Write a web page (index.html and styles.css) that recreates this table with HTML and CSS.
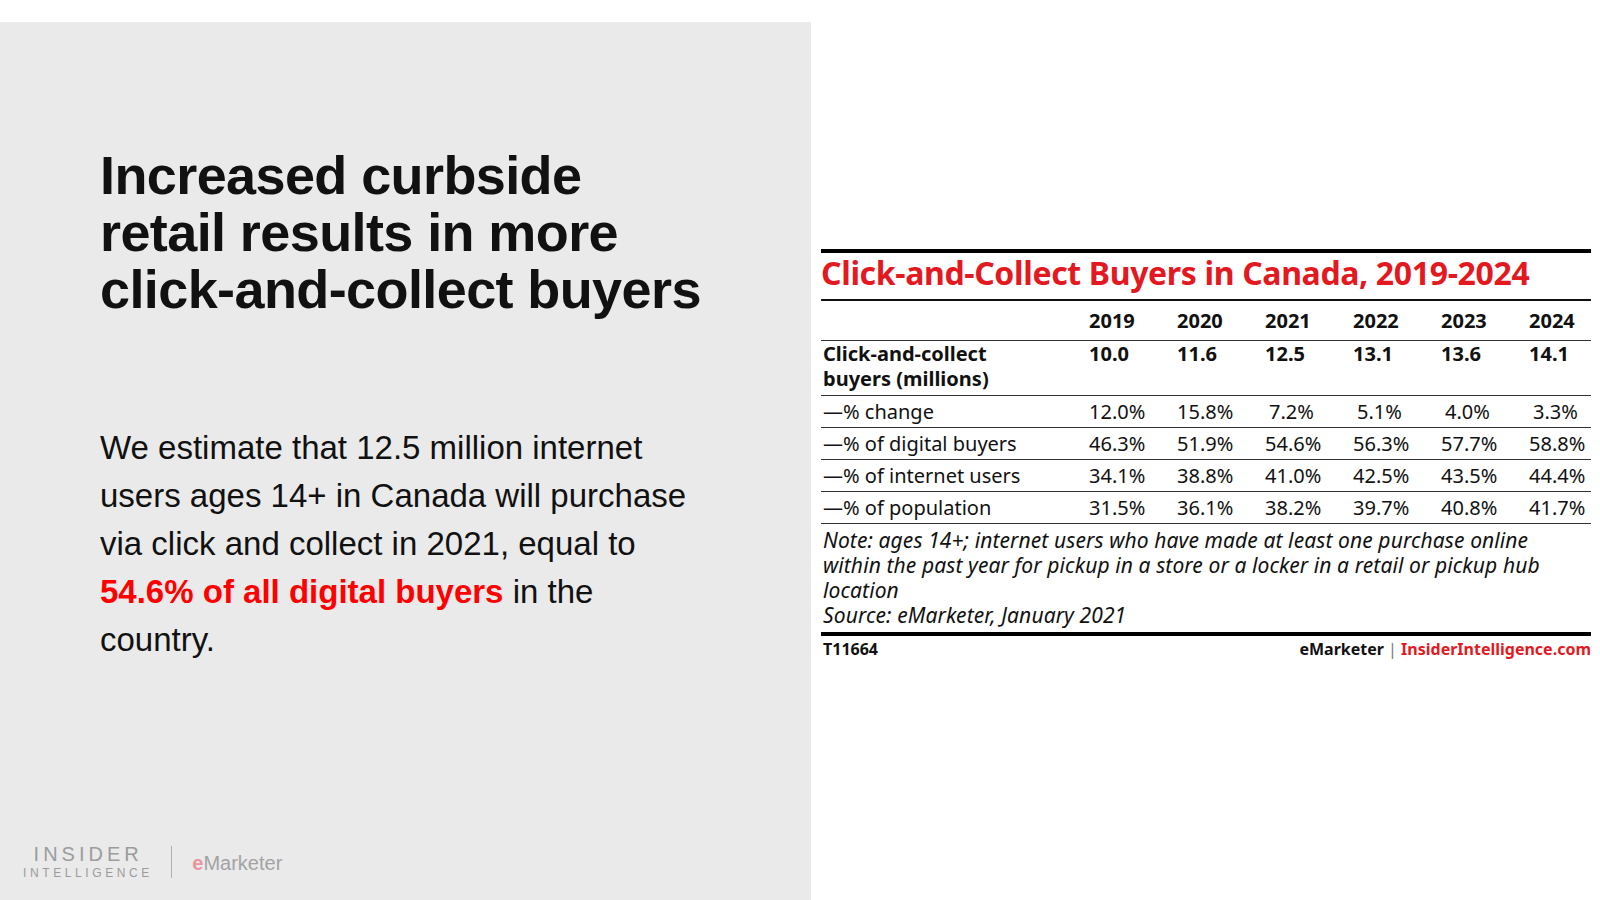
FILE: index.html
```html
<!DOCTYPE html>
<html lang="en">
<head>
<meta charset="utf-8">
<title>Click-and-Collect Buyers in Canada</title>
<link rel="stylesheet" href="styles.css">
</head>
<body>
<div class="topbar"></div>
<div class="slide">
  <section class="left">
    <h1 class="headline">Increased curbside<br>retail results in more<br>click-and-collect buyers</h1>
    <p class="lede">We estimate that 12.5 million internet users ages 14+ in Canada will purchase via click and collect in 2021, equal to <strong class="hl">54.6% of all digital buyers</strong> in the country.</p>
    <div class="brand">
      <div class="ii">
        <span class="ii-top">INSIDER</span>
        <span class="ii-bot">INTELLIGENCE</span>
      </div>
      <span class="brand-sep"></span>
      <span class="emk"><span class="emk-e">e</span>Marketer</span>
    </div>
  </section>
  <section class="right">
    <div class="chart">
      <div class="chart-title">Click-and-Collect Buyers in Canada, 2019-2024</div>
      <div class="row head">
        <span></span><span>2019</span><span>2020</span><span>2021</span><span>2022</span><span>2023</span><span>2024</span>
      </div>
      <div class="row main">
        <span>Click-and-collect buyers (millions)</span><span>10.0</span><span>11.6</span><span>12.5</span><span>13.1</span><span>13.6</span><span>14.1</span>
      </div>
      <div class="row">
        <span>—% change</span><span>12.0%</span><span>15.8%</span><span class="n1">7.2%</span><span class="n1">5.1%</span><span class="n1">4.0%</span><span class="n1">3.3%</span>
      </div>
      <div class="row">
        <span>—% of digital buyers</span><span>46.3%</span><span>51.9%</span><span>54.6%</span><span>56.3%</span><span>57.7%</span><span>58.8%</span>
      </div>
      <div class="row">
        <span>—% of internet users</span><span>34.1%</span><span>38.8%</span><span>41.0%</span><span>42.5%</span><span>43.5%</span><span>44.4%</span>
      </div>
      <div class="row">
        <span>—% of population</span><span>31.5%</span><span>36.1%</span><span>38.2%</span><span>39.7%</span><span>40.8%</span><span>41.7%</span>
      </div>
      <div class="note">Note: ages 14+; internet users who have made at least one purchase online within the past year for pickup in a store or a locker in a retail or pickup hub location<br>Source: eMarketer, January 2021</div>
      <div class="chart-foot">
        <span class="code">T11664</span>
        <span class="credit"><b>eMarketer</b> <span class="bar">|</span> <b class="red">InsiderIntelligence.com</b></span>
      </div>
    </div>
  </section>
</div>
</body>
</html>
```

FILE: styles.css
```css
* { box-sizing: border-box; }
html, body { margin: 0; padding: 0; background: #fff; }
body { width: 1600px; height: 900px; overflow: hidden; }

.topbar { height: 22px; background: #fff; }

.slide { display: flex; height: 878px; }

.left {
  width: 811px;
  background: #eaeaea;
  display: flex;
  flex-direction: column;
  padding: 125px 0 0 100px;
  font-family: "Liberation Sans", Arial, sans-serif;
  color: #111;
}

.headline {
  margin: 0;
  width: 660px;
  font-size: 54px;
  line-height: 57px;
  font-weight: 700;
  letter-spacing: -0.6px;
}

.lede {
  margin: 106px 0 0;
  width: 600px;
  font-size: 33px;
  line-height: 48px;
  font-weight: 400;
}
.hl { color: #ff0000; font-weight: 700; }

.brand {
  margin-top: auto;
  margin-left: -77px;
  padding-bottom: 20px;
  display: flex;
  align-items: center;
  color: #9c9c9c;
}
.ii { display: flex; flex-direction: column; align-items: center; }
.ii-top { font-size: 20px; line-height: 20px; letter-spacing: 4px; margin-right: -4px; }
.ii-bot { font-size: 12px; line-height: 14px; letter-spacing: 3.6px; margin-right: -3.6px; margin-top: 2px; }
.brand-sep { width: 1px; height: 32px; background: #b0b0b0; margin: 0 20px 0 22px; }
.emk { font-size: 20px; letter-spacing: 0; color: #a3a3a3; margin-top: 2px; }
.emk-e { color: #e8959d; font-weight: 700; }

.right { flex: 1; background: #fff; padding: 227px 0 0 10px; }

.chart {
  width: 770px;
  font-family: "Noto Sans", "Open Sans", sans-serif;
  color: #111;
  border-top: 4px solid #000;
}
.chart-title {
  color: #e3191f;
  font-size: 32px;
  line-height: 40px;
  font-weight: 700;
  letter-spacing: -0.35px;
  padding-bottom: 6px;
  border-bottom: 2px solid #111;
}
.row {
  display: grid;
  grid-template-columns: 266px 88px 88px 88px 88px 88px 64px;
  font-size: 20px;
  line-height: 25px;
  padding: 3px 0 3px 2px;
  border-bottom: 1.5px solid #333;
}
.row.head { font-weight: 700; padding: 7px 0 7px 2px; }
.row.main { font-weight: 700; padding: 0 0 4px 2px; }
.row.main span:first-child { padding-right: 40px; }
.n1 { padding-left: 4px; }

.note {
  font-style: italic;
  font-size: 21px;
  line-height: 25px;
  letter-spacing: 0.1px;
  padding: 4px 0 4px 2px;
  border-bottom: 4px solid #000;
}
.chart-foot {
  display: flex;
  justify-content: space-between;
  font-size: 16px;
  line-height: 20px;
  padding: 3px 0 0 2px;
}
.code { font-weight: 700; }
.credit b { font-weight: 700; }
.bar { color: #777; }
.red { color: #e3191f; }
```
